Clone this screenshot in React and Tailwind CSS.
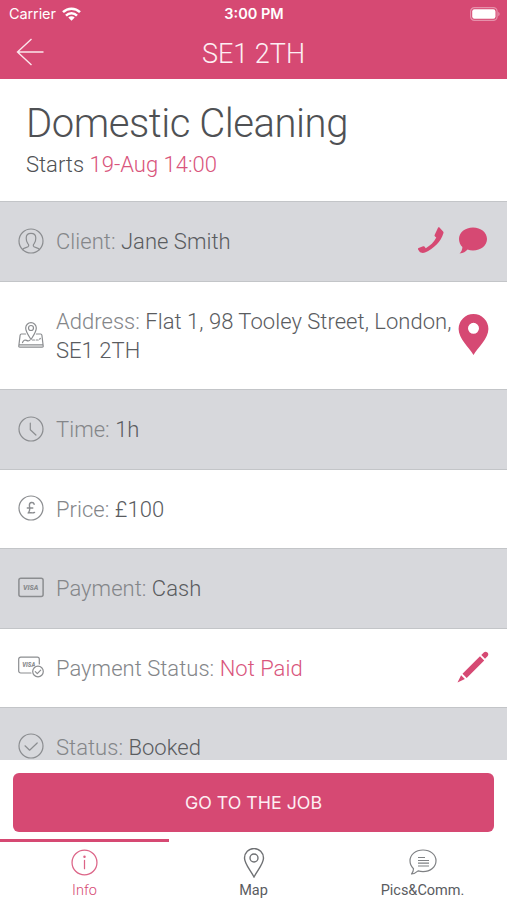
const PINK = '#d64973';

function Wifi() {
  return (
    <svg className="h-[14px] w-[19px]" viewBox="0 0 19 14" fill="none" stroke="white" strokeWidth="2.5">
      <path d="M1 5.1a12.2 12.2 0 0 1 17 0" />
      <path d="M4 8.6a7.8 7.8 0 0 1 11 0" />
      <path d="M9.5 13.7 6.3 10.6a4.5 4.5 0 0 1 6.4 0z" fill="white" stroke="none" />
    </svg>
  );
}

function Line({ children, className = 'h-[26px] w-[26px] text-[#8b8d90]' }) {
  return (
    <svg className={`shrink-0 ${className}`} viewBox="0 0 26 26" fill="none" stroke="currentColor" strokeWidth="1.2" strokeLinecap="round" strokeLinejoin="round">
      {children}
    </svg>
  );
}

const UserIcon = () => (
  <Line>
    <circle cx="13" cy="13" r="12" />
    <path d="M4.600 21.600c1-2.100 5.600-1.900 6.100-3.800.2-.9-.3-1.600-1-2.400-.9-1.200-1.500-3.200-1.500-5.400C8.200 6.800 10.100 5.400 13 5.400s4.800 1.400 4.800 4.600c0 2.200-.6 4.200-1.500 5.400-.7.800-1.200 1.500-1 2.400.5 1.900 5.100 1.700 6.100 3.800" />
  </Line>
);

const MapIcon = () => (
  <Line>
    <path d="M13 17.500C10.500 13.500 7.700 9.800 7.700 6a5.300 5.300 0 0 1 10.600 0c0 3.800-2.800 7.500-5.300 11.500z" />
    <circle cx="13" cy="6" r="2.500" />
    <path d="M7.600 12H3.400c-.8 0-1.200.4-1.300 1.200L.8 24c-.1.700.3 1.100 1 1.100h22.400c.7 0 1.100-.4 1-1.100l-1.300-10.800c-.1-.8-.5-1.200-1.300-1.200h-4.200M1.200 22.900h23.600" />
    <path d="M4.500 20.600c1-2.300 2.500-3 4-2.200s2.300.6 3.400-.3" />
    <path d="M14.500 18h5.500c1 0 1.500-.8 2.300-1.500" strokeDasharray="2 1.700" />
  </Line>
);

const ClockIcon = () => (
  <Line>
    <circle cx="13" cy="13" r="12" />
    <path d="M12.300 7v6.800l5.600 5.200" />
  </Line>
);

const PoundIcon = () => (
  <Line>
    <circle cx="13" cy="13" r="12" />
    <path d="M16.200 9.200c-.7-2.600-4.800-2.300-4.800.7 0 2.700 1.500 5.300-1.200 8.100 1.600-1 4.300.8 6.300-.6M9.300 13h5.500" strokeWidth="1.400" />
  </Line>
);

const VisaIcon = () => (
  <Line>
    <rect x="0.9" y="3.200" width="24.2" height="18.300" rx="2" strokeWidth="1.500" />
    <text x="5" y="15.200" fontSize="7.500" fontWeight="900" fontStyle="italic" textLength="15.500" lengthAdjust="spacingAndGlyphs" fill="currentColor" stroke="none">VISA</text>
  </Line>
);

const VisaCheckIcon = () => (
  <Line>
    <path d="M13 19H2.700a2 2 0 0 1-2-2V5.200a2 2 0 0 1 2-2h16.600a2 2 0 0 1 2 2V10" />
    <text x="4.300" y="12.800" fontSize="6.500" fontWeight="900" fontStyle="italic" textLength="13" lengthAdjust="spacingAndGlyphs" fill="currentColor" stroke="none">VISA</text>
    <circle cx="20" cy="17.500" r="6.400" fill="white" stroke="none" />
    <circle cx="20" cy="17.500" r="5.300" />
    <path d="m17.300 17.600 2 2 3.400-3.500" />
  </Line>
);

const CheckIcon = () => (
  <Line>
    <circle cx="13" cy="13" r="12" />
    <path d="m7 12.800 4.600 4.400 7.600-7.200" />
  </Line>
);

function Row({ icon, label, value, more, height, grey, pink, children }) {
  const color = pink ? 'text-[#d9557c]' : 'text-[#5a5c5f]';
  return (
    <div className={`flex shrink-0 items-center border-t border-[#c3c5c8] pb-[2px] pl-[18px] pr-[18px] ${height} ${grey ? 'bg-[#d7d8dc]' : 'bg-white'}`}>
      {icon}
      <div className="ml-3 flex-1 pt-[2px] text-[22px] leading-[29px] tracking-[0.03px] text-[#848689]">
        <p className="whitespace-nowrap">
          {label}: <span className={color}>{value}</span>
        </p>
        {more && <p className={color}>{more}</p>}
      </div>
      {children}
    </div>
  );
}

function Tab({ label, active, children }) {
  return (
    <div className={`flex flex-1 flex-col items-center border-t-[3px] pt-[7px] ${active ? 'border-[#d64973] text-[#d64973]' : 'border-transparent text-[#5a5c5f]'}`}>
      {children}
      <span className={`mt-[5px] text-[14.500px] leading-[20px] ${active ? 'font-light' : 'font-normal'}`}>{label}</span>
    </div>
  );
}

export default function App() {
  return (
    <div className="flex h-[900px] w-[507px] flex-col overflow-hidden bg-white font-['Roboto',sans-serif] font-light">
      <header className="h-[79px] shrink-0 bg-[#d64973] text-white">
        <div className="grid h-[27px] grid-cols-3 items-center pl-[9px] pr-[7px] font-['Inter',sans-serif] text-[14.500px]">
          <div className="flex items-center gap-[6px] font-normal">
            <span className="pt-px text-[14.500px] tracking-[-0.1px]">Carrier</span>
            <Wifi />
          </div>
          <span className="-ml-[1px] pt-px text-center font-semibold">3:00 PM</span>
          <svg className="h-[14px] w-[30px] justify-self-end" viewBox="0 0 30 14">
            <rect x="0.600" y="0.600" width="26.500" height="12.800" rx="3.800" fill="none" stroke="white" strokeOpacity=".4" strokeWidth="1.200" />
            <rect x="2.200" y="2.200" width="23.300" height="9.600" rx="2.200" fill="white" />
            <path d="M28.400 4.800v4.400c1.500-.7 1.500-3.700 0-4.400" fill="white" fillOpacity=".5" />
          </svg>
        </div>
        <div className="grid h-[50px] grid-cols-[1fr_auto_1fr] items-center pl-[16px] pr-[16px]">
          <svg className="h-[28px] w-[28px]" viewBox="0 0 28 28" fill="none" stroke="#fbe6ec" strokeWidth="1.400">
            <path d="M15.500 1 1.500 14l14 13M1.500 14h26" />
          </svg>
          <h1 className="pt-[4px] text-[27px] leading-[32px] text-[#fdeff3]">SE1 2TH</h1>
        </div>
      </header>

      <main className="flex h-[681px] shrink-0 flex-col overflow-hidden">
        <section className="h-[122px] shrink-0 pl-[26px] pt-[21px] text-[#4f5154]">
          <h2 className="text-[40px] leading-[48px] tracking-[-0.45px]">Domestic Cleaning</h2>
          <p className="mt-[2px] text-[22px] leading-[29px]">
            Starts <span className="text-[#d9557c]">19-Aug 14:00</span>
          </p>
        </section>

        <Row icon={<UserIcon />} label="Client" value="Jane Smith" height="h-[80px]" grey>
          <div className="mr-px flex items-center gap-[14px]">
            <svg className="h-[27px] w-[27px]" viewBox="0 0 27 27" fill={PINK}>
              <path d="M21 .7c.5-.5 1.200-.4 1.700.1l3.400 3.600c.5.500.6 1.200.3 1.900C24 14.500 17 21.500 8 25.600c-1.300.6-2.900.7-4.100 0-1-.6-2-1.700-2.800-3.200-.3-.6-.1-1.100.5-1.400l4.500-1.700c.6-.2 1.100-.1 1.500.4l1.200 1.500c4.400-2.300 8.200-6 10.500-10.600l-1.300-1.200c-.5-.4-.6-.9-.4-1.500z" />
            </svg>
            <svg className="h-[27px] w-[30px]" viewBox="0 0 30 27" fill={PINK}>
              <path d="M15 .5c8 0 14 5 14 11.500s-6 11.500-14 11.500c-2 0-3.800-.3-5.500-.9C7.500 25 5.500 26.300 1.500 26.500c1.800-1.600 2.800-3.500 2.900-6.400C2.300 18 1 15.200 1 12 1 5.500 7 .5 15 .5z" />
            </svg>
          </div>
        </Row>
        <Row icon={<MapIcon />} label="Address" value="Flat 1, 98 Tooley Street, London," more="SE1 2TH" height="h-[108px]">
          <svg className="-ml-4 h-[41px] w-[31px] shrink-0" viewBox="0 0 31 41" fill={PINK} fillRule="evenodd">
            <path d="M15.500 0A14.900 14.900 0 0 0 .6 15C.6 24.500 11 33.500 15.500 41 20 33.500 30.400 24.500 30.400 15A14.900 14.900 0 0 0 15.500 0zm0 8.800a5.500 5.500 0 1 1 0 11 5.500 5.500 0 0 1 0-11z" />
          </svg>
        </Row>
        <Row icon={<ClockIcon />} label="Time" value="1h" height="h-[80px]" grey />
        <Row icon={<PoundIcon />} label="Price" value="£100" height="h-[79px]" />
        <Row icon={<VisaIcon />} label="Payment" value="Cash" height="h-[80px]" grey />
        <Row icon={<VisaCheckIcon />} label="Payment Status" value="Not Paid" height="h-[79px]" pink>
          <svg className="h-[32px] w-[32px]" viewBox="0 0 32 32" fill={PINK}>
            <path d="m.5 31.500 3.600-7.200 3.800 3.800zM5.500 22.800 23 5.300l4.200 4.200L9.700 27zM24.300 4.100l2.500-2.600c1.200-1.200 2.500-1 3.600.1s1.300 2.400.1 3.600L28 7.800z" />
          </svg>
        </Row>
        <Row icon={<CheckIcon />} label="Status" value="Booked" height="h-[79px]" grey />
      </main>

      <div className="shrink-0 px-[13px] pb-[7px] pt-[13px]">
        <button className="block h-[59px] w-full rounded-[6px] bg-[#d64973] pt-[2px] font-['Inter',sans-serif] text-[17.800px] font-normal text-[#fdeff3]">GO TO THE JOB</button>
      </div>

      <nav className="flex flex-1">
        <Tab label="Info" active>
          <Line className="h-[27px] w-[27px] text-[#dc6487]">
            <circle cx="13" cy="13" r="12" />
            <path d="M13 11v8" />
            <circle cx="13" cy="7.500" r=".6" fill="currentColor" />
          </Line>
        </Tab>
        <Tab label="Map">
          <svg className="-mt-[1px] -mb-[2px] h-[30px] w-[22px]" viewBox="0 0 22 30" fill="none" stroke="#6f7174" strokeWidth="1.400">
            <path d="M11 29C7.500 22 1.500 16 1.500 10a9.500 9.500 0 0 1 19 0c0 6-6 12-9.500 19z" />
            <circle cx="11" cy="10" r="4" />
          </svg>
        </Tab>
        <Tab label="Pics&Comm.">
          <svg className="h-[27px] w-[28px]" viewBox="0 0 28 27" fill="none" stroke="#7f8184" strokeWidth="1.200" strokeLinejoin="round">
            <path d="M14 1c7.500 0 13 4.700 13 10.800s-5.500 10.900-13 10.900c-1.700 0-3.400-.3-4.900-.8C7.200 23.600 5.500 24.700 2.500 25c1.200-1.500 2-3.200 2-5.300C2.300 17.700 1 15 1 11.800 1 5.700 6.500 1 14 1z" />
            <path d="M9 8.500h7M9 11.500h11M9 14.200h11M9 17h11" />
          </svg>
        </Tab>
      </nav>
    </div>
  );
}
